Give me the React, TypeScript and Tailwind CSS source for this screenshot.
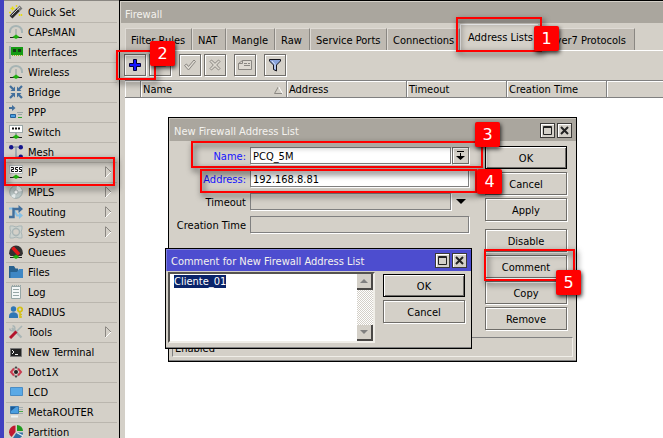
import { useEffect, useRef, type ReactNode } from "react";

type MenuEntry = {
  label: string;
  icon: ReactNode;
  submenu?: boolean;
};

const Icon = ({ children }: { children: ReactNode }) => (
  <svg viewBox="0 0 14 14" className="h-3.5 w-3.5 shrink-0" aria-hidden="true">
    {children}
  </svg>
);

const Plug = () => (
  <>
    <path d="M1 12.500h12" stroke="#222" />
    <path d="M7 9.500l3.500 2.500L7 14l-3.500-2z" fill="#22b010" />
  </>
);

const Antenna = () => (
  <Icon>
    <path d="M1 8V6.500A6 5.500 0 0 1 13 6.500V8" fill="none" stroke="#a6b4b4" strokeWidth="2" />
    <path d="M7 4v6" stroke="#8e9c9c" />
    <Plug />
  </Icon>
);

const menu: MenuEntry[] = [
  {
    label: "Quick Set",
    icon: (
      <Icon>
        <path d="M2 12.200L9.500 4.500" stroke="#2c2c2c" strokeWidth="4" />
        <path d="M9.500 4.500L12 2" stroke="#777" strokeWidth="4" />
        <path d="M2.500 10.500L11 2" stroke="#c8c8c8" />
        <path d="M3.500 1.500v4M1.500 3.500h4M0 7.500h2M7.500 0v2M10.500 9v2M12.500 9v2" stroke="#e6dc10" strokeWidth="1.400" />
      </Icon>
    ),
  },
  { label: "CAPsMAN", icon: <Antenna /> },
  {
    label: "Interfaces",
    icon: (
      <Icon>
        <path d="M1 1v13" stroke="#9cacac" strokeWidth="2" />
        <path d="M2 2h12v8H2z" fill="#159b14" />
        <path d="M4 4h3v3H4zM9 4h3v3H9z" fill="#173b16" />
        <path d="M3 10.500h11" stroke="#8cb81a" strokeDasharray="1 1" />
      </Icon>
    ),
  },
  { label: "Wireless", icon: <Antenna /> },
  {
    label: "Bridge",
    icon: (
      <Icon>
        <path d="M1 1l3 3M13 1l-3 3M1 13l3-3M13 13l-3-3" stroke="#426f9c" strokeWidth="2.200" />
        <path d="M6 1.500V6H1.500zM8 1.500V6h4.500zM6 12.500V8H1.500zM8 12.500V8h4.500z" fill="#426f9c" />
      </Icon>
    ),
  },
  {
    label: "PPP",
    icon: (
      <Icon>
        <path d="M0 3h3" stroke="#426f9c" strokeWidth="2" />
        <path d="M3 0l3.500 3L3 6z" fill="#426f9c" />
        <path d="M1.500 9.500h5v3h-5z" fill="#4a9ee0" stroke="#24619a" />
        <path d="M8 7.500h6M9 9.500h4" stroke="#9aa4a4" />
        <path d="M9 12.500h4" stroke="#2aa12a" />
      </Icon>
    ),
  },
  {
    label: "Switch",
    icon: (
      <Icon>
        <rect x="0.5" y="0.5" width="13" height="7" fill="#fff" stroke="#9aa6a6" />
        <path d="M3 3.500h8" stroke="#111" strokeWidth="2" strokeDasharray="2 1" />
        <path d="M7 8v3" stroke="#9aa8a8" strokeWidth="2" />
        <Plug />
      </Icon>
    ),
  },
  {
    label: "Mesh",
    icon: (
      <Icon>
        <path d="M2 2h10M7 2v10h5" fill="none" stroke="#8a9aa8" strokeWidth="1.400" />
        <g fill="#15158c">
          <circle cx="2.200" cy="2.200" r="2.200" />
          <circle cx="11.800" cy="2.200" r="2.200" />
          <circle cx="11.800" cy="11.800" r="2.200" />
        </g>
      </Icon>
    ),
  },
  {
    label: "IP",
    submenu: true,
    icon: (
      <Icon>
        <rect x="0.5" y="0.5" width="13" height="8" fill="#fff" stroke="#b4bcbc" />
        <path
          d="M2 2.500h2.500v2h-2v2H5M9 2.500H6.500v2h2v2H6M13 2.500h-2.500v2h2v2H10"
          fill="none"
          stroke="#111"
        />
        <Plug />
      </Icon>
    ),
  },
  {
    label: "MPLS",
    submenu: true,
    icon: (
      <Icon>
        <circle cx="7" cy="7" r="6.300" fill="#bcc8c8" stroke="#9aa8a8" />
        <path d="M7 7L8 1a6 6 0 0 1 5 5z" fill="#f2f6f6" />
        <path d="M7 7L2 11a6 6 0 0 0 4 2z" fill="#e4eaea" />
        <circle cx="7" cy="7" r="2" fill="#fff" stroke="#8e9a9a" strokeWidth="0.600" />
      </Icon>
    ),
  },
  {
    label: "Routing",
    submenu: true,
    icon: (
      <Icon>
        <path d="M0 3.500h4l4 7h3" fill="none" stroke="#86c0e6" strokeWidth="2" />
        <path d="M10 7l4 3.500-4 3.500z" fill="#86c0e6" />
        <path d="M0 12h4.500V4H10" fill="none" stroke="#426f9c" strokeWidth="2.400" />
        <path d="M9.500 0l4.500 4-4.500 4z" fill="#426f9c" />
      </Icon>
    ),
  },
  {
    label: "System",
    submenu: true,
    icon: (
      <Icon>
        <path
          d="M1 1h3l3 1 3-1h3v3l-1 3 1 3v3h-3l-3-1-3 1H1v-3l1-3-1-3z"
          fill="#ccd2ce"
          stroke="#a9b5b5"
        />
        <circle cx="7" cy="7" r="3.500" fill="#d4d0c8" stroke="#a9b5b5" strokeWidth="1.400" />
      </Icon>
    ),
  },
  {
    label: "Queues",
    icon: (
      <Icon>
        <path d="M0 8.500a7 8 0 0 1 14 0l-1.500 2.500h-11z" fill="#303030" />
        <path d="M3.500 2.500l6.500 7" stroke="#e01818" strokeWidth="3.400" />
        <Plug />
      </Icon>
    ),
  },
  {
    label: "Files",
    icon: (
      <Icon>
        <path d="M0 1h5l1.500 2.500H9V13H0z" fill="#28628f" />
        <path d="M1.500 13V7H8l2-3h4v9z" fill="#3e87c4" />
      </Icon>
    ),
  },
  {
    label: "Log",
    icon: (
      <Icon>
        <path d="M2.500 1.500h9v12h-9z" fill="#f4f7f7" stroke="#96a6a6" />
        <path d="M4 4.500h6M4 7.500h6M4 10.500h6" stroke="#96a6a6" />
        <path d="M3 0.500h9" stroke="#96a6a6" strokeDasharray="1 1" />
      </Icon>
    ),
  },
  {
    label: "RADIUS",
    icon: (
      <Icon>
        <circle cx="4.500" cy="4" r="2.700" fill="#2f76b5" />
        <path d="M0 13V11c0-5 9-5 9 0v2z" fill="#2f76b5" />
        <circle cx="11" cy="4.500" r="2.200" fill="none" stroke="#d4c019" strokeWidth="1.800" />
        <path d="M11 7v6M11 9.500h2M11 12h2" stroke="#d4c019" strokeWidth="1.600" />
      </Icon>
    ),
  },
  {
    label: "Tools",
    submenu: true,
    icon: (
      <Icon>
        <path d="M3 3l9.500 9.500" stroke="#a9b5b5" strokeWidth="2.200" />
        <path d="M0.800 3.500a2.500 2.500 0 1 0 2.700-2.700" fill="none" stroke="#a9b5b5" strokeWidth="1.600" />
        <path d="M13 1L7 7" stroke="#a9b5b5" strokeWidth="1.600" />
        <path d="M7.500 6.500L1 13" stroke="#b3142c" strokeWidth="3" />
      </Icon>
    ),
  },
  {
    label: "New Terminal",
    icon: (
      <Icon>
        <path d="M1.500 3.500h11v8h-11z" fill="#222" stroke="#777" />
        <path d="M3 5l2 2-2 2M6 9.500h3" fill="none" stroke="#eee" />
      </Icon>
    ),
  },
  {
    label: "Dot1X",
    icon: (
      <Icon>
        <circle cx="7" cy="7" r="2" fill="#222" />
        <path d="M7 1l2 2.500H5zM7 13l2-2.500H5z" fill="#444" />
        <path d="M5 3.500L2 7l3 3.500M9 3.500L12 7l-3 3.500" fill="none" stroke="#c83c50" strokeWidth="2" />
      </Icon>
    ),
  },
  {
    label: "LCD",
    icon: (
      <Icon>
        <path d="M1.500 2.500h12v8h-12z" fill="#5aa9e6" stroke="#4a8cc4" />
      </Icon>
    ),
  },
  {
    label: "MetaROUTER",
    icon: (
      <Icon>
        <path d="M1.500 1.500h8v7h-8z" fill="#4a9ee0" stroke="#3a78b0" />
        <path d="M2 2h5L2 6z" fill="#1d5a94" />
        <path d="M2 11.500h7" stroke="#eef2f2" strokeWidth="2" />
        <path d="M10 2.500h4M10 4.500h4M10 8.500h4" stroke="#a4aeae" />
        <path d="M10 6.500h4" stroke="#4aa94a" />
      </Icon>
    ),
  },
  {
    label: "Partition",
    icon: (
      <Icon>
        <path d="M6.500 7V0.500A6.500 6.500 0 0 0 2.500 12z" fill="#c0182f" />
        <path d="M8 6V0a6 6 0 0 1 6 6z" fill="#1f9a1f" />
        <path d="M7.500 7.500H14a6.500 6.500 0 0 1-10 5.500z" fill="#2f6ea5" />
        <path d="M7.500 7.500L14 11" stroke="#e8eef2" strokeWidth="1.200" />
      </Icon>
    ),
  },
];

const tabs = [
  { label: "Filter Rules", width: "w-[67px]" },
  { label: "NAT", width: "w-[34px]" },
  { label: "Mangle", width: "w-[49px]" },
  { label: "Raw", width: "w-[35px]" },
  { label: "Service Ports", width: "w-[77px]" },
  { label: "Connections", width: "w-[73px]" },
  { label: "Address Lists", width: "w-[78px]", active: true },
  { label: "Layer7 Protocols", width: "w-[97px]" },
];

const bevel =
  "border border-[#6f6d69] bg-[#d4d0c8] shadow-[inset_1px_1px_0_#fff,1px_1px_0_#fff]";

function Sidebar() {
  return (
    <nav className="flex w-[119px] shrink-0 border-l-4 border-[#4040c0] bg-[#d4d0c8]">
      <ul className="w-full border-t border-[#8a8782] px-0.5 pt-0.5">
        {menu.map((item) => (
          <li key={item.label} className="h-5 border-b border-[#bab6ae]">
            <a href="#" className="flex h-[18px] items-center gap-[5px] pl-[3px]">
              {item.icon}
              <span className="pt-px whitespace-nowrap">{item.label}</span>
              {item.submenu ? (
                <svg viewBox="0 0 7 12" className="mr-[5px] ml-auto h-3 w-[7px]" aria-hidden="true">
                  <path d="M0.500 11V1" stroke="#8a8782" />
                  <path d="M0.500 0.500L6 6" stroke="#8a8782" />
                  <path d="M6 6L0.500 11.500" stroke="#fff" />
                </svg>
              ) : null}
            </a>
          </li>
        ))}
      </ul>
    </nav>
  );
}

function ToolButton({ label, className = "", children }: { label: string; className?: string; children: ReactNode }) {
  return (
    <button aria-label={label} className={`flex h-[22px] w-[22px] items-center justify-center ${bevel} ${className}`}>
      {children}
    </button>
  );
}

function Toolbar() {
  return (
    <div className="-ml-px flex h-[30px] items-start border-t border-white pt-[3px]">
      <ToolButton label="Add">
        <svg viewBox="0 0 12 12" className="h-3 w-3">
          <path d="M4.500 0.500h3v4h4v3h-4v4h-3v-4h-4v-3h4z" fill="#1414ff" stroke="#00003c" />
        </svg>
      </ToolButton>
      <ToolButton label="Remove" className="ml-[3px]">
        <svg viewBox="0 0 12 12" className="h-3 w-3">
          <path d="M0.500 4.500h11v3h-11z" fill="#d4d0c8" stroke="#8a8782" />
        </svg>
      </ToolButton>
      <ToolButton label="Enable" className="ml-2">
        <svg viewBox="0 0 14 12" className="h-3 w-3.5">
          <path d="M1.500 6.500l2-1.500L5.500 7.500 11 1l1.500 1.500-7 8.500z" fill="#dedad2" stroke="#8a8782" />
        </svg>
      </ToolButton>
      <ToolButton label="Disable" className="ml-[3px]">
        <svg viewBox="0 0 12 12" className="h-3 w-3">
          <path
            d="M1 2.500L2.500 1 6 4.300 9.500 1 11 2.500 7.700 6 11 9.500 9.500 11 6 7.700 2.500 11 1 9.500 4.300 6z"
            fill="#dedad2"
            stroke="#8a8782"
          />
        </svg>
      </ToolButton>
      <ToolButton label="Comment" className="ml-2">
        <svg viewBox="0 0 14 12" className="h-3 w-3.5">
          <path d="M4.500 1.500h9v9h-13v-6z" fill="#dedad2" stroke="#8a8782" />
          <path d="M4.500 1.500v3h-4M6 4.500h3M10 4.500h2M6 6.500h6" fill="none" stroke="#8a8782" />
        </svg>
      </ToolButton>
      <ToolButton label="Filter" className="ml-2">
        <svg viewBox="0 0 14 14" className="h-3.5 w-3.5">
          <path d="M1.500 1.500h11v1.500l-4 4v6l-3-1.500V7l-4-4z" fill="#8aa4dc" stroke="#16161e" />
          <path d="M4 3l3 3.500V11" fill="none" stroke="#dce6fa" />
        </svg>
      </ToolButton>
    </div>
  );
}

function AddressTable() {
  const cell = "border-r border-[#808080] pt-px pl-0.5 text-left font-normal shadow-[inset_1px_1px_0_#fff]";
  return (
    <div className="flex-1 bg-white">
      <table className="w-full table-fixed border-separate border-spacing-0">
        <thead>
          <tr className="h-[18px] bg-[#d4d0c8] *:border-y *:border-y-[#808080]">
            <th className={`w-4 ${cell}`} aria-label="Flags" />
            <th className={`w-[146px] ${cell}`}>
              <div className="flex items-center justify-between pr-[3px]">
                Name
                <svg viewBox="0 0 9 8" className="h-2 w-[9px]" aria-hidden="true">
                  <path d="M8 7.500H0.500L4.500 0.500" fill="none" stroke="#8a8782" />
                  <path d="M4.500 0.500L8.500 7.500" stroke="#fff" />
                </svg>
              </div>
            </th>
            <th className={`w-[120px] ${cell}`}>Address</th>
            <th className={`w-[100px] ${cell}`}>Timeout</th>
            <th className={`w-[100px] ${cell}`}>Creation Time</th>
            <th className="shadow-[inset_1px_1px_0_#fff]" aria-label="More" />
          </tr>
        </thead>
      </table>
    </div>
  );
}

function FirewallWindow() {
  return (
    <main className="flex min-w-0 flex-1 flex-col border-t border-l border-black bg-[#d4d0c8]">
      <h1 className="mt-px ml-px flex h-[21px] items-center bg-[#aaa69e] pt-[3px] pl-1 text-[#f4f2ee]">Firewall</h1>
      <div className="flex flex-1 flex-col pl-[5px]">
        <div role="tablist" className="flex h-[27px] items-end">
          {tabs.map((tab) =>
            tab.active ? (
              <button
                key={tab.label}
                role="tab"
                aria-selected="true"
                className={`h-[26px] shrink-0 border-t border-l border-white bg-[#d4d0c8] pl-[7px] text-left whitespace-nowrap ${tab.width}`}
              >
                {tab.label}
              </button>
            ) : (
              <button
                key={tab.label}
                role="tab"
                aria-selected="false"
                className={`h-[22px] shrink-0 border-t border-r border-l border-t-[#dedad4] border-r-[#8a8782] border-l-[#dedad4] bg-[#bfbab2] pt-0.5 pl-[5px] text-left whitespace-nowrap ${tab.width}`}
              >
                {tab.label}
              </button>
            )
          )}
        </div>
        <Toolbar />
        <AddressTable />
      </div>
    </main>
  );
}

function TitleButtons() {
  const box = "flex h-[15px] w-[15px] items-center justify-center border border-[#3c3a38] bg-[#d4d0c8] shadow-[inset_1px_1px_0_#fff]";
  return (
    <div className="flex gap-0.5">
      <button aria-label="Maximize" className={box}>
        <svg viewBox="0 0 9 9" className="h-[9px] w-[9px]">
          <path d="M0.500 0.500h8v8h-8zM0 1.500h9" fill="none" stroke="#222" />
        </svg>
      </button>
      <button aria-label="Close" className={box}>
        <svg viewBox="0 0 9 9" className="h-[9px] w-[9px]">
          <path d="M1 1l7 7M8 1L1 8" stroke="#222" strokeWidth="2" />
        </svg>
      </button>
    </div>
  );
}

function DialogButton({ children, primary }: { children: ReactNode; primary?: boolean }) {
  return (
    <button
      className={
        primary
          ? "h-[23px] w-[82px] border border-black bg-[#d4d0c8] pt-0.5 shadow-[inset_1px_1px_0_#fff,inset_-1px_-1px_0_#6f6d69]"
          : `h-[23px] w-[82px] pt-0.5 ${bevel}`
      }
    >
      {children}
    </button>
  );
}

function AddressListDialog() {
  const label = "w-[78px] pt-0.5 pr-px text-right whitespace-nowrap";
  const field = "h-[17px] min-w-0 flex-1 border border-[#808080] px-0.5 pt-0.5 shadow-[1px_1px_0_#fff]";
  return (
    <section className="absolute top-[117px] left-[168px] w-[409px] border border-black bg-[#d4d0c8]">
      <header className="flex h-[23px] items-center justify-between border-t border-l border-[#c8c4bc] bg-[#aaa69e] pr-1 pl-1 text-[#f4f2ee]">
        <h2 className="pt-0.5">New Firewall Address List</h2>
        <TitleButtons />
      </header>
      <div className="flex justify-between pr-[9px]">
        <form className="flex w-[300px] flex-col gap-1.5 pt-1.5">
          <div className="flex h-[17px] items-center gap-[3px]">
            <label htmlFor="name" className={`${label} text-[#1414ff]`}>Name:</label>
            <input id="name" defaultValue="PCQ_5M" className={`${field} bg-white`} />
            <button type="button" aria-label="Choose name" className={`-ml-0.5 flex h-[17px] w-[17px] items-center justify-center ${bevel}`}>
              <svg viewBox="0 0 9 9" className="h-[9px] w-[9px]">
                <path d="M1 0.500h7M4.500 2v4" stroke="#000" />
                <path d="M4 2h1v3h4L4.500 9 0 5h4z" />
              </svg>
            </button>
          </div>
          <div className="flex h-[17px] items-center gap-[3px]">
            <label htmlFor="address" className={`${label} text-[#1414ff]`}>Address:</label>
            <input id="address" defaultValue="192.168.8.81" className={`${field} bg-white`} />
          </div>
          <div className="flex h-[17px] items-center gap-[3px]">
            <label htmlFor="timeout" className={label}>Timeout</label>
            <input id="timeout" className={`${field} bg-[#d4d0c8]`} />
            <button type="button" aria-label="Expand timeout" className="-ml-0.5 flex h-[17px] w-[17px] items-center justify-center">
              <svg viewBox="0 0 10 5" className="h-[5px] w-2.5">
                <path d="M0 0h10L5 5z" />
              </svg>
            </button>
          </div>
          <div className="flex h-[17px] items-center gap-[3px]">
            <label htmlFor="created" className={label}>Creation Time</label>
            <input id="created" readOnly className={`${field} bg-[#d4d0c8]`} />
          </div>
        </form>
        <div className="flex flex-col gap-2 pt-[5px]">
          <div className="flex flex-col gap-[3px]">
            <DialogButton primary>OK</DialogButton>
            <DialogButton>Cancel</DialogButton>
            <DialogButton>Apply</DialogButton>
          </div>
          <div className="flex flex-col gap-[3px]">
            <DialogButton>Disable</DialogButton>
            <DialogButton>Comment</DialogButton>
            <DialogButton>Copy</DialogButton>
            <DialogButton>Remove</DialogButton>
          </div>
        </div>
      </div>
      <footer className="mx-[3px] mt-[7px] mb-[3px] flex h-5 items-center border border-[#808080] border-r-[#f0eee8] border-b-[#f0eee8] pt-0.5 pl-0.5">
        Enabled
      </footer>
      <div className="h-px bg-[#808080]" />
    </section>
  );
}

function ScrollArrow({ label, path }: { label: string; path: string }) {
  return (
    <button
      aria-label={label}
      className="flex h-4 w-4 items-center justify-center border-r-2 border-b-2 border-[#4a4846] bg-[#d4d0c8]"
    >
      <svg viewBox="0 0 8 4" className="h-1 w-2">
        <path d={path} fill="#808080" />
      </svg>
    </button>
  );
}

function CommentDialog() {
  const comment = useRef<HTMLTextAreaElement>(null);

  // the comment opens ready to be overwritten
  useEffect(() => {
    comment.current?.focus();
    comment.current?.select();
  }, []);

  return (
    <section className="absolute top-[248px] left-[165px] w-[307px] border border-black bg-[#d4d0c8]">
      <header className="flex h-[22px] items-center justify-between border-t border-l border-[#8080dc] bg-[#4d4dcf] pr-1 pl-1 text-[#f4f2ee]">
        <h2 className="pt-0.5">Comment for New Firewall Address List</h2>
        <TitleButtons />
      </header>
      <div className="flex justify-between pr-1.5 pb-1 pl-0.5">
        <div className="mt-px flex h-[71px] w-[207px] border-2 border-[#55534f] border-r-[#f0eee8] border-b-[#f0eee8] bg-white">
          <textarea
            ref={comment}
            aria-label="Comment"
            defaultValue="Cliente_01"
            className="min-w-0 flex-1 resize-none overflow-hidden pt-px pl-1 leading-[13px] outline-none selection:bg-[#0a246a] selection:text-white"
          />
          <div className="flex flex-col justify-between bg-[repeating-conic-gradient(#d4d0c8_0_25%,#fff_0_50%)] bg-size-[2px_2px]">
            <ScrollArrow label="Scroll up" path="M0 4h8L4 0z" />
            <ScrollArrow label="Scroll down" path="M0 0h8L4 4z" />
          </div>
        </div>
        <div className="flex flex-col gap-[3px] pt-[3px]">
          <DialogButton primary>OK</DialogButton>
          <DialogButton>Cancel</DialogButton>
        </div>
      </div>
      <div className="h-px bg-[#808080]" />
    </section>
  );
}

const marks = [
  { box: "top-[157px] left-1 h-[29px] w-[111px]" },
  { box: "top-[17px] left-[456px] h-[35px] w-[86px]", step: "1", badge: "top-[26px] left-[534px]" },
  { box: "top-[50px] left-[116px] h-[30px] w-10", step: "2", badge: "top-[41px] left-[150px]" },
  { box: "top-[141px] left-[191px] h-[27px] w-[292px]", step: "3", badge: "top-[122px] left-[475px]" },
  { box: "top-[169px] left-[200px] h-6 w-[277px]", step: "4", badge: "top-[169px] left-[477px]" },
  { box: "top-[249px] left-[484px] h-8 w-[91px]", step: "5", badge: "top-[270px] left-[556px]" },
];

function StepMarks() {
  return (
    <>
      {marks.map((mark) => (
        <div key={mark.box} className="pointer-events-none">
          <div className={`absolute border-2 border-[#ff0000] drop-shadow-[2px_3px_3px_rgba(0,0,0,0.8)] ${mark.box}`} />
          {mark.step ? (
            <div
              className={`absolute flex h-[25px] w-[25px] items-center justify-center rounded-xs bg-[#ff0000] font-['DejaVu_Sans'] text-base text-white shadow-[1px_2px_4px_rgba(0,0,0,0.8)] ${mark.badge}`}
            >
              {mark.step}
            </div>
          ) : null}
        </div>
      ))}
    </>
  );
}

export default function App() {
  return (
    <div className="relative flex h-screen w-full overflow-hidden bg-[#d4d0c8] font-['DejaVu_Sans_Condensed','DejaVu_Sans',sans-serif] text-[11px] leading-[15px] text-black">
      <Sidebar />
      <FirewallWindow />
      <AddressListDialog />
      <CommentDialog />
      <StepMarks />
    </div>
  );
}
